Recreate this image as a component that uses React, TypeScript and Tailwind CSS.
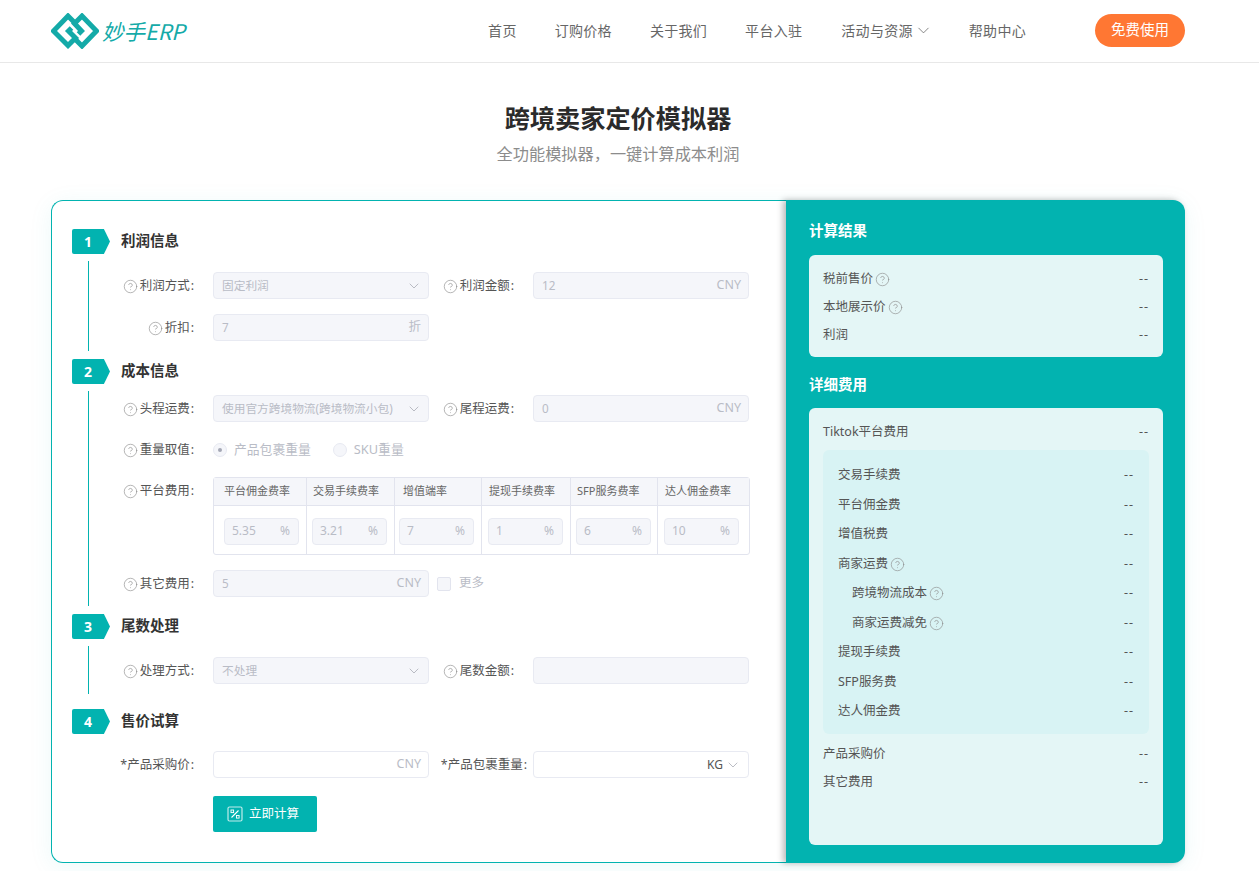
import React from "react";
import { ChevronDown, CircleHelp } from "lucide-react";

const Help = () => <CircleHelp size={15} strokeWidth={1} className="shrink-0 text-[#8a8a8a]" />;

const Label = ({ text, w, help = true, pr = "pr-[19px]" }: { text: string; w: string; help?: boolean; pr?: string }) => (
  <div className={`${w} ${pr} pt-[2px] shrink-0 flex items-center justify-end gap-[2px] text-[12.5px] text-[#555]`}>
    {help && <Help />}
    <span className="whitespace-nowrap">{text}<span className="ml-[1px]">:</span></span>
  </div>
);

const Field = ({ value, suffix, select, enabled }: { value?: string; suffix?: string; select?: boolean; enabled?: boolean }) => (
  <div className={`w-[216px] h-[27px] shrink-0 rounded-[4px] border border-[#e8eaf2] flex items-center justify-between pl-[8px] ${select ? "pr-[6px]" : "pr-[7px]"} ${enabled ? "bg-white" : "bg-[#f5f6fa]"}`}>
    <span className="text-[11.7px] text-[#b9bcc6] whitespace-nowrap">{value}</span>
    {suffix && <span className="text-[12.5px] text-[#b9bcc6]">{suffix}</span>}
    {select && <ChevronDown size={16} strokeWidth={1.2} className="text-[#a9acb5]" />}
  </div>
);

const Step = ({ n, title }: { n: number; title: string }) => (
  <div className="flex items-center h-[25px]">
    <div className="w-[38px] h-[25px] rounded-l-[2px] bg-[#02b3b0] text-white text-[14px] font-bold flex items-center justify-center pr-[6px] [clip-path:polygon(0_0,84%_0,100%_50%,84%_100%,0_100%)]">{n}</div>
    <div className="ml-[11px] pb-[2px] text-[14.5px] font-bold text-[#333]">{title}</div>
  </div>
);

const Row = ({ children, className = "" }: { children: React.ReactNode; className?: string }) => (
  <div className={`flex items-center h-[27px] ${className}`}>{children}</div>
);

const columns = [
  { t: "平台佣金费率", v: "5.35", hp: "pl-[10px]", ip: "pl-[10px]" },
  { t: "交易手续费率", v: "3.21", hp: "pl-[6px]", ip: "pl-[5px]" },
  { t: "增值端率", v: "7", hp: "pl-[8px]", ip: "pl-[4px]" },
  { t: "提现手续费率", v: "1", hp: "pl-[7px]", ip: "pl-[6px]" },
  { t: "SFP服务费率", v: "6", hp: "pl-[6px]", ip: "pl-[5px]" },
  { t: "达人佣金费率", v: "10", hp: "pl-[7px]", ip: "pl-[6px]" },
];

const FeeTable = () => (
  <div className="w-[537px] h-[78px] rounded-[3px] border border-[#e2e4ee] grid grid-cols-[93px_88px_87px_89px_87px_91px] grid-rows-[28px_48px]">
    {columns.map((c, i) => (
      <div key={c.t} className={`${c.hp} bg-[#f5f6fa] border-b border-[#e2e4ee] flex items-center text-[11px] text-[#666] whitespace-nowrap ${i < 5 ? "border-r" : ""}`}>{c.t}</div>
    ))}
    {columns.map((c, i) => (
      <div key={c.v} className={`${c.ip} pt-[2px] flex items-center border-[#e2e4ee] ${i < 5 ? "border-r" : ""}`}>
        <div className="w-[75px] h-[27px] rounded-[4px] border border-[#e8eaf2] bg-[#f5f6fa] flex items-center justify-between pl-[7px] pr-[8px] text-[12px] text-[#b9bcc6]">
          <span>{c.v}</span><span>%</span>
        </div>
      </div>
    ))}
  </div>
);

const Radio = ({ label, checked }: { label: string; checked?: boolean }) => (
  <div className="flex items-center gap-[7px]">
    <div className="w-[14px] h-[14px] rounded-full border border-[#e8eaf2] bg-[#f5f6fa] flex items-center justify-center">
      {checked && <div className="w-[4px] h-[4px] rounded-full bg-[#a5a8b5]" />}
    </div>
    <span className="text-[12.8px] text-[#b9bcc6] whitespace-nowrap">{label}</span>
  </div>
);

const Result = ({ label, help, h = "h-[28px]", indent }: { label: string; help?: boolean; h?: string; indent?: boolean }) => (
  <div className={`flex items-center justify-between pt-[2px] ${h} text-[12.5px] text-[#555]`}>
    <span className={`flex items-center gap-[2px] ${indent ? "pl-[14px]" : ""}`}>
      {label}
      {help && <Help />}
    </span>
    <span className="tracking-[1px]">--</span>
  </div>
);

const Logo = () => (
  <div className="flex items-center h-[36px]">
    <svg width="48" height="36" viewBox="51 13 48 36" fill="none" stroke="#14aaa8" strokeWidth="5">
      <path d="M75.5 23.5 L68 16 L53.5 31 L68 45.5 L75.5 38 L68.5 31 L71.5 28" />
      <path d="M74.5 38.5 L82 46 L96.5 31 L82 16 L74.5 23.5 L81.5 31 L78.5 34" />
    </svg>
    <span className="ml-[3px] text-[21.5px] leading-none italic font-normal text-[#14aaa8] whitespace-nowrap [font-family:'Noto_Sans_CJK_SC','Noto_Sans',sans-serif]">妙手ERP</span>
  </div>
);

export default function App() {
  return (
    <div className="min-h-[871px] bg-white [font-family:'Noto_Sans','Noto_Sans_CJK_SC',sans-serif]">
      <header className="h-[63px] border-b border-[#e8e8e8] flex items-center justify-between pl-[51px] pr-[74px]">
        <Logo />
        <nav className="flex items-center pb-[2px] text-[14px] tracking-[0.3px] text-[#666]">
          <span>首页</span>
          <span className="ml-[38px]">订购价格</span>
          <span className="ml-[38px]">关于我们</span>
          <span className="ml-[38px]">平台入驻</span>
          <span className="ml-[39px] flex items-center gap-[1px]">活动与资源<ChevronDown size={19} strokeWidth={1} /></span>
          <span className="ml-[36px]">帮助中心</span>
          <span className="ml-[69px] w-[90px] h-[33px] rounded-full bg-[#ff7733] text-[14.5px] text-white tracking-normal flex items-center justify-center">免费使用</span>
        </nav>
      </header>

      <main className="pt-[37px] pb-[8px]">
        <div className="ml-[51px] w-[1134px]">
          <h1 className="text-center text-[25.2px] leading-[36px] font-bold text-[#2b2b2b]">跨境卖家定价模拟器</h1>
          <p className="mt-[6px] text-center text-[16.2px] leading-[24px] text-[#8c8c8c]">全功能模拟器，一键计算成本利润</p>

          <div className="mt-[34px] h-[663px] flex rounded-[12px] shadow-[0_4px_24px_rgba(2,179,176,0.08)]">
            <section className="w-[735px] border-y border-l border-[#02b3b0] rounded-l-[12px] pl-[20px] pt-[28px] bg-white">
              <Step n={1} title="利润信息" />
              <div className="ml-[16px] mt-[7px] mb-[8px] border-l border-[#02b3b0] pt-[11px] pb-[10px] flex flex-col gap-[15px]">
                <Row>
                  <Label text="利润方式" w="w-[124px]" />
                  <Field value="固定利润" select />
                  <Label text="利润金额" w="w-[104px]" />
                  <Field value="12" suffix="CNY" />
                </Row>
                <Row>
                  <Label text="折扣" w="w-[124px]" />
                  <Field value="7" suffix="折" />
                </Row>
              </div>

              <Step n={2} title="成本信息" />
              <div className="ml-[16px] mt-[7px] mb-[8px] border-l border-[#02b3b0] pt-[4px] pb-[9px] flex flex-col">
                <Row>
                  <Label text="头程运费" w="w-[124px]" />
                  <Field value="使用官方跨境物流(跨境物流小包)" select />
                  <Label text="尾程运费" w="w-[104px]" />
                  <Field value="0" suffix="CNY" />
                </Row>
                <Row className="mt-[14px]">
                  <Label text="重量取值" w="w-[124px]" />
                  <div className="flex items-center gap-[22px]">
                    <Radio label="产品包裹重量" checked />
                    <Radio label="SKU重量" />
                  </div>
                </Row>
                <div className="flex mt-[14px]">
                  <div className="h-[27px] flex items-center"><Label text="平台费用" w="w-[124px]" /></div>
                  <FeeTable />
                </div>
                <Row className="mt-[15px]">
                  <Label text="其它费用" w="w-[124px]" />
                  <Field value="5" suffix="CNY" />
                  <div className="ml-[8px] w-[14px] h-[14px] rounded-[2px] border border-[#e2e4ee] bg-[#f5f6fa]" />
                  <span className="ml-[8px] text-[12.5px] text-[#b9bcc6]">更多</span>
                </Row>
              </div>

              <Step n={3} title="尾数处理" />
              <div className="ml-[16px] mt-[7px] mb-[15px] border-l border-[#02b3b0] pt-[11px] pb-[10px]">
                <Row>
                  <Label text="处理方式" w="w-[124px]" />
                  <Field value="不处理" select />
                  <Label text="尾数金额" w="w-[104px]" />
                  <Field />
                </Row>
              </div>

              <Step n={4} title="售价试算" />
              <div className="ml-[17px] mt-[17px]">
                <Row>
                  <Label text="*产品采购价" w="w-[124px]" help={false} />
                  <Field suffix="CNY" enabled />
                  <Label text="*产品包裹重量" w="w-[104px]" help={false} pr="pr-[6px]" />
                  <div className="w-[216px] h-[27px] rounded-[4px] border border-[#e8eaf2] bg-white flex items-center justify-end gap-[2px] pr-[7px] text-[12px] text-[#555]">
                    KG<ChevronDown size={16} strokeWidth={1.2} className="text-[#a9acb5]" />
                  </div>
                </Row>
                <button className="ml-[124px] mt-[18px] w-[104px] h-[36px] rounded-[2px] bg-[#02b3b0] text-white text-[12.5px] flex items-center pl-[14px] gap-[6px]">
                  <svg width="16" height="16" viewBox="0 0 16 16" fill="none" stroke="white">
                    <rect x="1" y="1" width="14" height="14" rx="1.5" strokeOpacity="0.75" strokeWidth="1.2" />
                    <path d="M11.5 4.5 L4.5 11.5" strokeWidth="1.1" />
                    <rect x="4" y="4" width="2.6" height="2.6" strokeWidth="0.9" />
                    <rect x="9.5" y="9.5" width="2.6" height="2.6" strokeWidth="0.9" />
                  </svg>
                  立即计算
                </button>
              </div>
            </section>

            <aside className="relative z-10 w-[399px] rounded-r-[12px] bg-[#02b3b0] pl-[23px] pr-[22px] pt-[21px] shadow-[-3px_0_6px_rgba(0,0,0,0.28)]">
              <h2 className="h-[20px] leading-[18px] text-[14.5px] font-bold text-white">计算结果</h2>
              <div className="mt-[14px] rounded-[6px] bg-[#e4f6f6] px-[14px] py-[9px]">
                <Result label="税前售价" help />
                <Result label="本地展示价" help />
                <Result label="利润" />
              </div>
              <h2 className="mt-[18px] h-[20px] leading-[18px] text-[14.5px] font-bold text-white">详细费用</h2>
              <div className="mt-[13px] h-[437px] rounded-[6px] bg-[#e4f6f6] px-[14px] pt-[9px]">
                <Result label="Tiktok平台费用" />
                <div className="mt-[5px] rounded-[6px] bg-[#d8f3f4] px-[15px] pt-[10px] pb-[8px]">
                  <Result h="h-[29.5px]" label="交易手续费" />
                  <Result h="h-[29.5px]" label="平台佣金费" />
                  <Result h="h-[29.5px]" label="增值税费" />
                  <Result h="h-[29.5px]" label="商家运费" help />
                  <Result h="h-[29.5px]" label="跨境物流成本" help indent />
                  <Result h="h-[29.5px]" label="商家运费减免" help indent />
                  <Result h="h-[29.5px]" label="提现手续费" />
                  <Result h="h-[29.5px]" label="SFP服务费" />
                  <Result h="h-[29.5px]" label="达人佣金费" />
                </div>
                <div className="mt-[6px]">
                  <Result label="产品采购价" />
                  <Result label="其它费用" />
                </div>
              </div>
            </aside>
          </div>
        </div>
      </main>
    </div>
  );
}
